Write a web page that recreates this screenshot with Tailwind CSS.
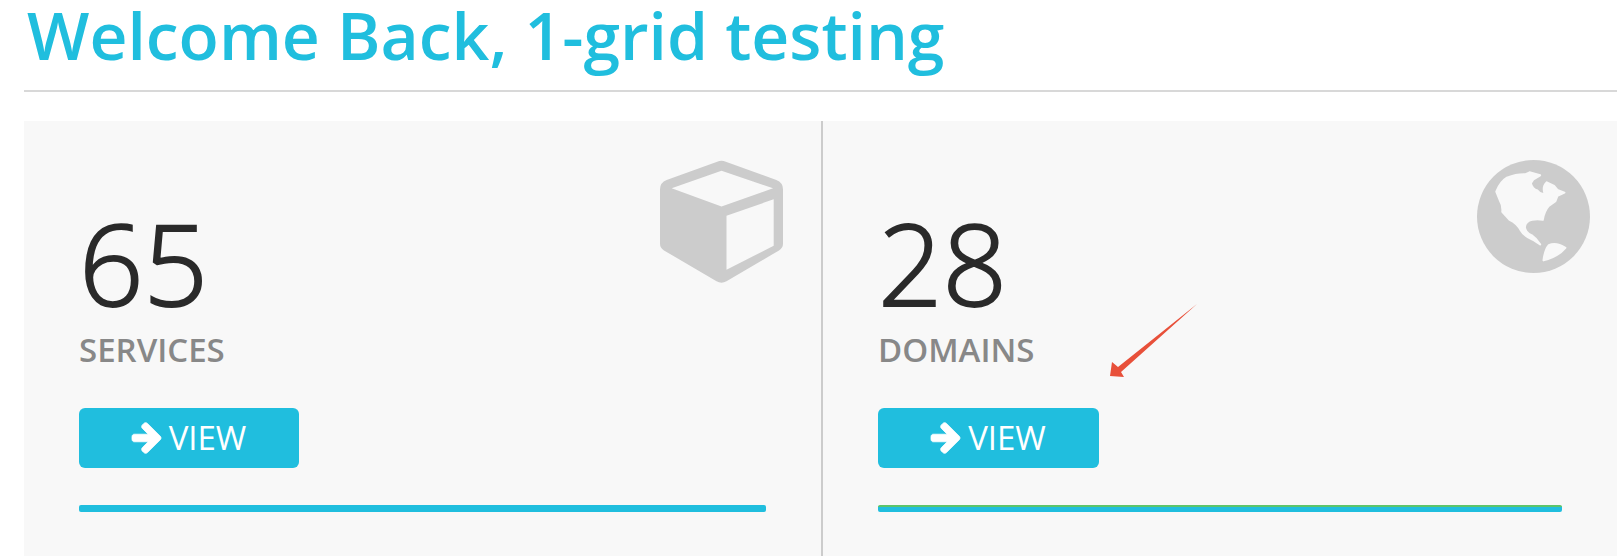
<!DOCTYPE html>
<html lang="en">
  <head>
    <meta charset="UTF-8" />
    <title>Welcome Back</title>
    <script src="https://cdn.jsdelivr.net/npm/@tailwindcss/browser@4"></script>
  </head>
  <body class="relative h-[556px] overflow-hidden bg-white font-['Open_Sans',sans-serif]">
    <main class="pl-6">
      <!-- Heading -->
      <header class="mt-[2px] border-b-2 border-[#d8d8d8] pb-6">
        <h1 class="pl-[3px] text-[66px] leading-[64px] font-semibold whitespace-nowrap text-[#20bede]">Welcome Back, 1-grid testing</h1>
      </header>

      <!-- Stat cards -->
      <section class="mt-[29px] grid h-[440px] grid-cols-[799px_1fr] bg-[#f8f8f8]">
        <div class="relative border-r-2 border-[#cccccc] pl-[55px] pt-[84px]">
          <svg class="absolute left-[636px] top-[39px] h-[123px] w-[123px] fill-[#cccccc]" viewBox="90 60 370 370" fill-rule="evenodd">
            <path d="M262 65Q275 60 288 65L440 120Q460 128 460 148L460 312Q460 325 448 332L290 425Q275 433 260 425L102 332Q90 325 90 312L90 148Q90 128 110 120ZM125 145L275 200L430 145L275 92ZM290 228L290 390L432 318L432 178Z" />
          </svg>
          <p class="text-[113px] leading-[114px] font-light text-[#2a2a2a] [-webkit-text-stroke:2px_#2a2a2a]">65</p>
          <p class="mt-[11px] text-[33px] leading-10 font-semibold text-[#888888]">SERVICES</p>
          <a class="mt-[38px] flex h-[60px] w-[220px] items-center justify-center gap-[8px] rounded-md bg-[#20bede] text-[33px] text-white">
            <svg class="h-[30px] w-[29px] overflow-visible fill-white stroke-white stroke-[40]" viewBox="128 218 1472 1484"><path d="M1600 960q0 54-37 91l-651 651q-39 37-91 37-51 0-90-37l-75-75q-38-38-38-91t38-91l293-293h-704q-52 0-84.5-37.5t-32.5-90.5v-128q0-53 32.5-90.5t84.5-37.5h704l-293-294q-38-36-38-90t38-90l75-75q38-38 90-38 53 0 91 38l651 651q37 35 37 90z" /></svg>
            <span>VIEW</span>
          </a>
          <div class="mt-[37px] h-[7px] w-[687px] rounded-[2px] bg-[#20bede]"></div>
        </div>

        <div class="relative pl-[55px] pt-[84px]">
          <svg class="absolute left-[654px] top-[39px] h-[113px] w-[113px]" viewBox="80 60 340 340">
            <circle cx="250" cy="230" r="170" fill="#cccccc" />
            <g fill="#f8f8f8" stroke="#f8f8f8" stroke-width="6" stroke-linejoin="round">
              <path d="M138 155Q150 125 170 113Q200 102 225 103L238 97L270 106L250 118L242 130Q246 148 262 152Q272 165 283 160Q276 140 290 127L312 138L322 150L343 158L322 168L316 184L296 198Q282 214 278 240Q262 236 246 240Q226 244 224 262Q226 280 244 286L256 296L270 314L248 300Q222 290 212 272Q200 250 178 240L156 216Q158 196 148 180Z" />
              <path d="M280 362Q284 330 296 316Q318 306 346 324Q322 352 280 362Z" />
            </g>
          </svg>
          <p class="text-[113px] leading-[114px] font-light text-[#2a2a2a] [-webkit-text-stroke:2px_#2a2a2a]">28</p>
          <p class="mt-[11px] text-[33px] leading-10 font-semibold text-[#888888]">DOMAINS</p>
          <a class="mt-[38px] flex h-[60px] w-[221px] items-center justify-center gap-[8px] rounded-md bg-[#20bede] text-[33px] text-white">
            <svg class="h-[30px] w-[29px] overflow-visible fill-white stroke-white stroke-[40]" viewBox="128 218 1472 1484"><path d="M1600 960q0 54-37 91l-651 651q-39 37-91 37-51 0-90-37l-75-75q-38-38-38-91t38-91l293-293h-704q-52 0-84.5-37.5t-32.5-90.5v-128q0-53 32.5-90.5t84.5-37.5h704l-293-294q-38-36-38-90t38-90l75-75q38-38 90-38 53 0 91 38l651 651q37 35 37 90z" /></svg>
            <span>VIEW</span>
          </a>
          <div class="mt-[37px] h-[7px] w-[684px] rounded-[2px] border-t-2 border-[#5cc46a] bg-[#20bede]"></div>
        </div>
      </section>
    </main>

    <!-- Annotation arrow -->
    <svg class="absolute left-[1100px] top-[295px] h-[90px] w-[105px]" viewBox="1100 295 105 90">
      <polygon fill="#e8503a" points="1197,304 1121,372 1124,377 1110,376 1112,362 1118,367" />
    </svg>
  </body>
</html>
